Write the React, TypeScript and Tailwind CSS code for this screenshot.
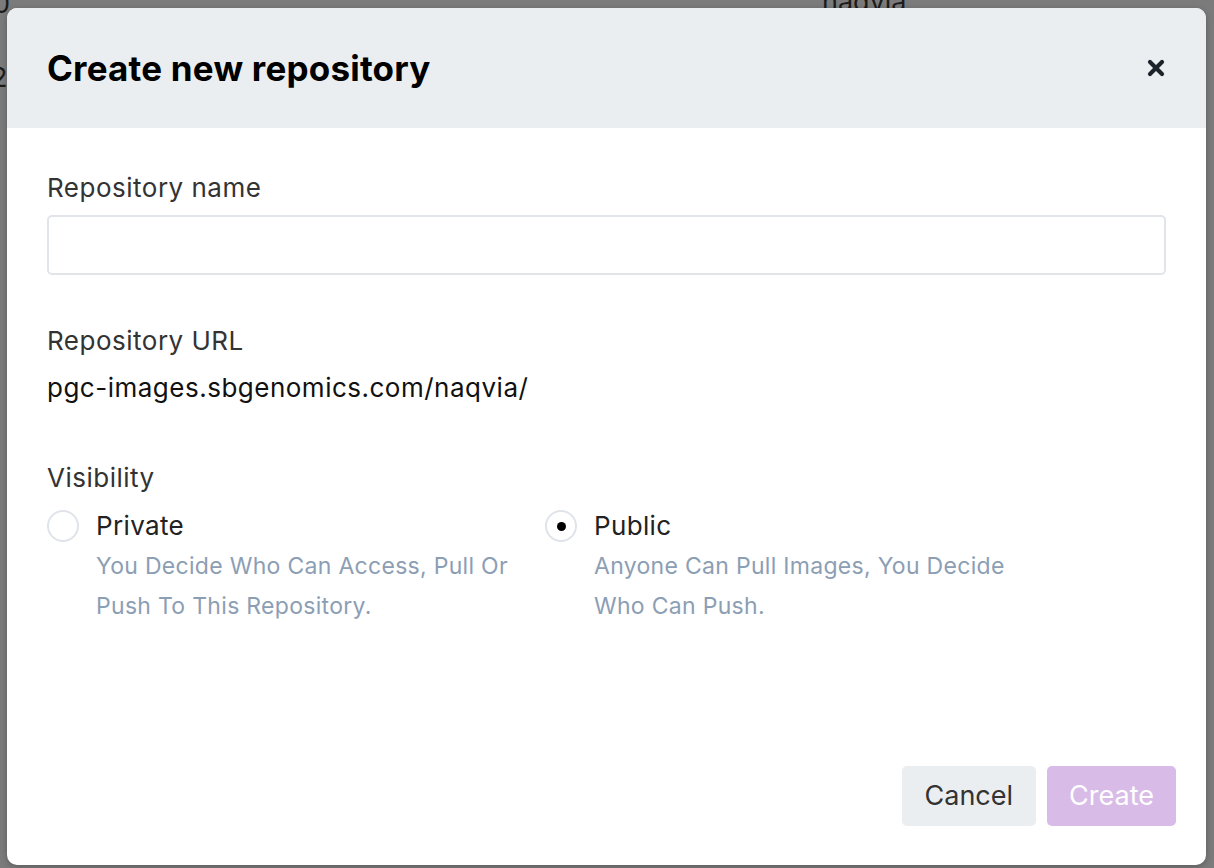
import { useState } from "react";

const FONT = { fontFamily: "Inter, 'Liberation Sans', sans-serif" };

type Visibility = "private" | "public";

const options: { id: Visibility; label: string; lines: string[] }[] = [
  { id: "private", label: "Private", lines: ["You Decide Who Can Access, Pull Or", "Push To This Repository."] },
  { id: "public", label: "Public", lines: ["Anyone Can Pull Images, You Decide", "Who Can Push."] },
];

function Radio({ checked }: { checked: boolean }) {
  return (
    <span className="flex h-[32px] w-[32px] shrink-0 items-center justify-center rounded-full border-2 border-[#dfe4ea] bg-white">
      {checked ? <span className="h-[9px] w-[9px] rounded-full bg-black" /> : null}
    </span>
  );
}

export default function App() {
  const [name, setName] = useState("");
  const [visibility, setVisibility] = useState<Visibility>("public");

  return (
    <div style={FONT} className="relative h-[868px] w-full overflow-hidden bg-[#7b7b7b] pl-[7px] pr-[8px] pt-[8px]">
      {/* page content behind the overlay */}
      <span className="absolute left-[822px] top-[-18px] text-[27px] text-[#1c1c1c]">naqvia</span>
      <span className="absolute left-[-7px] top-[-16px] text-[27px] text-[#1c1c1c]">0</span>
      <span className="absolute left-[-9px] top-[58px] text-[27px] text-[#1c1c1c]">2</span>

      <div className="relative flex h-[857px] flex-col overflow-hidden rounded-[10px] bg-white shadow-[0_2px_6px_rgba(0,0,0,0.25)]">
        <div className="flex h-[120px] shrink-0 items-center justify-between bg-[#ebeef1] pl-[40px] pr-[38px]">
          <h1 className="text-[35px] font-bold tracking-[0.2px] text-black">Create new repository</h1>
          <button className="flex h-[24px] w-[24px] items-center justify-center text-[#1d232b]">
            <svg viewBox="0 0 20 20" className="h-[20px] w-[20px]">
              <path d="M4 4 L16 16 M16 4 L4 16" stroke="currentColor" strokeWidth="4.2" strokeLinecap="round" />
            </svg>
          </button>
        </div>

        <div className="flex flex-1 flex-col pl-[40px] pr-[40px] pt-[42px] text-[26px] tracking-[0.5px]">
          <label className="leading-[36px] text-[#333]">Repository name</label>
          <input
            value={name}
            onChange={(e) => setName(e.target.value)}
            className="mt-[9px] h-[60px] w-full rounded-[5px] border-2 border-[#e1e5ea] px-4 outline-none"
          />

          <div className="mt-[48px] leading-[36px] text-[#333]">Repository URL</div>
          <div className="mt-[11px] leading-[36px] text-[#111]">pgc-images.sbgenomics.com/naqvia/</div>

          <div className="mt-[54px] leading-[36px] text-[#333]">Visibility</div>
          <div className="mt-[12px] flex">
            {options.map((opt) => (
              <div
                key={opt.id}
                onClick={() => setVisibility(opt.id)}
                className="flex w-[498px] cursor-pointer items-start gap-[17px]"
              >
                <div className="flex h-[36px] items-center">
                  <Radio checked={visibility === opt.id} />
                </div>
                <div className="flex flex-col">
                  <span className="leading-[36px] tracking-[0.35px] text-[#222]">{opt.label}</span>
                  <span className="mt-[2px] text-[23px] leading-[40px] tracking-[0.3px] text-[#8c9eb4]">
                    {opt.lines[0]}
                    <br />
                    {opt.lines[1]}
                  </span>
                </div>
              </div>
            ))}
          </div>
        </div>

        <div className="flex justify-end gap-[11px] pb-[39px] pr-[30px] text-[27px]">
          <button className="h-[60px] rounded-[5px] bg-[#ebeef1] px-[23px] text-[#333]">Cancel</button>
          <button disabled className="h-[60px] rounded-[5px] bg-[#d9bbe8] px-[22px] text-white">
            Create
          </button>
        </div>
      </div>
    </div>
  );
}
